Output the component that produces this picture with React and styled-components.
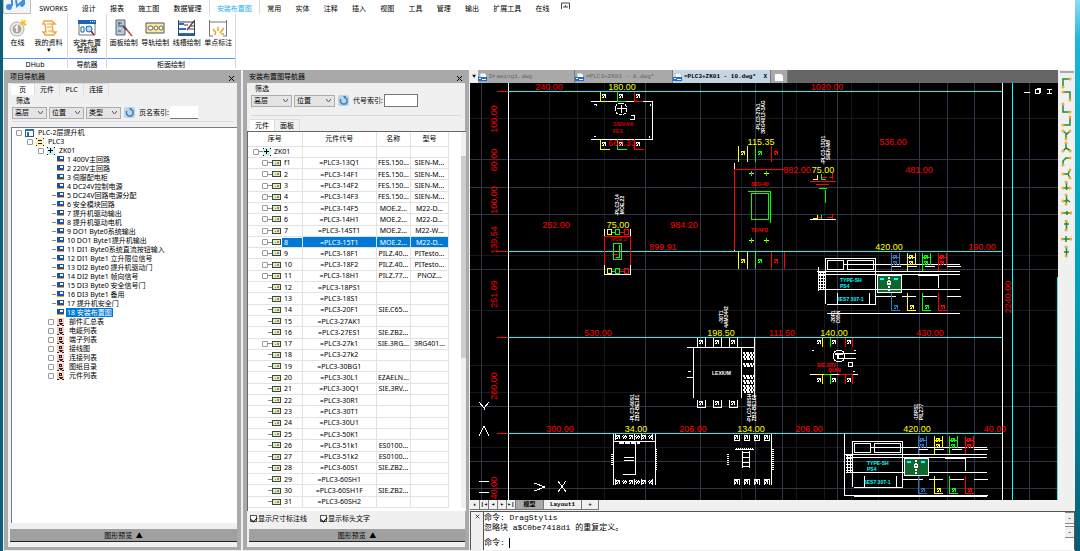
import React, { useState } from 'react';
import styled, { createGlobalStyle, css } from 'styled-components';

const GlobalStyle = createGlobalStyle`
  * { box-sizing: border-box; }
  body {
    margin: 0;
    background: #08708a;
    font: 7px/9px "Noto Sans", "Noto Sans CJK SC", sans-serif;
    color: #000;
  }
  button, input, select { font: inherit; color: inherit; margin: 0; }
  button { border: 0; padding: 0; background: none; }
`;

const Desktop = styled.div`
  height: 100vh;
  padding: 0 5px 0 3px;
  background: linear-gradient(to right, #0a6078 50%, transparent 50%),
    linear-gradient(#8fdcf4 0, #1fb4dc 40px, #08b0cc 130px, #009fba 300px, #0a7c96 430px, #045c72);
`;

const Window = styled.div`
  height: 100%;
  display: flex;
  flex-direction: column;
  background: #f0f0f0;
`;

/* ---------- ribbon ---------- */

const Ribbon = styled.header`
  height: 70px;
  background: #fff;
  flex: none;
`;

const TabStrip = styled.nav`
  height: 14px;
  max-width: 571px;
  display: flex;
  justify-content: space-between;
`;

const Logo = styled.div`
  width: 28px;
  height: 14px;
  border: 1px solid #b9bec8;
  border-top: 0;
  background: #f2f4f9;
  margin-right: 1px;
  svg { display: block; }
`;

const RibbonTab = styled.button`
  padding: 3px 7px 0;
  white-space: nowrap;
  ${(p) => p.$active && css`
    color: #1fb0ee;
    border-left: 1px solid #d8d8d8;
    border-right: 1px solid #d8d8d8;
  `}
`;

const Collapse = styled.button`
  padding: 0 4px;
`;

const Groups = styled.div`
  height: 54px;
  display: flex;
`;

const Group = styled.section`
  width: ${(p) => p.$width}px;
  display: flex;
  flex-direction: column;
  border-right: 1px solid #d4d7dc;
`;

const GroupButtons = styled.div`
  flex: 1;
  display: flex;
  justify-content: space-around;
  padding: 5px 1px 0;
  border-bottom: 1px solid #4a96ee;
`;

const GroupTitle = styled.div`
  height: 9px;
  line-height: 11px;
  text-align: center;
`;

const BigButton = styled.button`
  display: flex;
  flex-direction: column;
  align-items: center;
  gap: 2px;
  line-height: 7px;
  white-space: pre-line;
  svg { width: 20px; height: 18px; }
`;

/* ---------- docked panels ---------- */

const Work = styled.main`
  flex: 1;
  min-height: 0;
  display: flex;
`;

const Panel = styled.section`
  width: ${(p) => p.$width}px;
  flex: none;
  display: flex;
  flex-direction: column;
  border: solid #a9a9a9;
  border-width: 0 4px 3px;
  margin: 0 1px 1px;
  background: #f0f0f0;
`;

const PanelTitle = styled.h2`
  height: 13px;
  flex: none;
  margin: 0;
  padding: 2px 2px 0;
  background: #a9a9a9;
  font: inherit;
  display: flex;
  justify-content: space-between;
  svg { width: 7px; height: 7px; display: block; margin-top: 2px; }
`;

const PanelTabs = styled.div`
  display: flex;
  height: 12px;
  flex: none;
  padding: 0 3px;
`;

const PanelTab = styled.button`
  padding: 0 5px;
  min-width: 24px;
  border-right: 1px solid #ddd;
  border-top: 1px solid #ddd;
  background: ${(p) => (p.$active ? '#fff' : 'transparent')};
`;

const Filter = styled.fieldset`
  border: 0;
  border-bottom: 1px solid #d8d8d8;
  margin: 1px 4px ${(p) => p.$below}px;
  padding: 0;
  height: ${(p) => p.$height}px;
  flex: none;
  legend { padding: 0 2px; margin-left: 2px; height: 9px; }
`;

const FilterRow = styled.div`
  display: flex;
  align-items: center;
  gap: 2px;
  height: 15px;
`;

const SelectShell = styled.div`
  display: grid;
  width: ${(p) => p.$width}px;
  height: 12px;
  border: 1px solid #adadad;
  background: #e4e4e4;
  select, svg { grid-area: 1 / 1; }
  select {
    appearance: none;
    border: 0;
    background: none;
    padding: 0 2px;
    width: 100%;
    line-height: 9px;
  }
  svg { width: 5px; height: 4px; place-self: center end; margin-right: 3px; pointer-events: none; }
`;

const IndexLabel = styled.label`
  display: flex;
  align-items: center;
  gap: 1px;
  margin-left: 2px;
`;

const IndexInput = styled.input`
  width: ${(p) => p.$width}px;
  height: 13px;
  border: solid #777;
  border-width: ${(p) => (p.$boxed ? 1 : 0)}px;
  border-bottom-width: 1px;
  padding: 0 2px;
  background: #fff;
`;

const RefreshButton = styled.button`
  width: 11px;
  height: 11px;
  margin-left: 1px;
  svg { display: block; width: 11px; height: 11px; }
`;

const PreviewButton = styled.button`
  height: 13px;
  flex: none;
  margin: 6px 0 5px 2px;
  background: #a0a0a0;
  border-bottom: 1px solid #222;
`;

const Tree = styled.ul`
  flex: 1;
  min-height: 0;
  overflow: hidden;
  margin: 0 0 0 3px;
  padding: 0 4px;
  list-style: none;
  background: #fff;
  border: solid #777c88;
  border-width: 1px 0 0 1px;
`;

const TreeRow = styled.li`
  height: 9px;
  display: flex;
  align-items: center;
  gap: ${(p) => p.$gap}px;
  padding-left: ${(p) => p.$indent}px;
  white-space: nowrap;
  svg { flex: none; }
`;

const TreeText = styled.span`
  line-height: 9px;
  padding: 0 1px;
  ${(p) => p.$selected && css`
    background: #0078d7;
    color: #fff;
  `}
`;

const Expander = styled.span`
  width: 6px;
  height: 6px;
  flex: none;
  border: 1px solid ${(p) => (p.$hidden ? 'transparent' : '#999')};
  border-radius: 1px;
`;

const Dash = styled.span`
  width: 4px;
  height: 1px;
  flex: none;
  background: ${(p) => (p.$hidden ? 'transparent' : '#888')};
`;

/* ---------- component table ---------- */

const TableBox = styled.div`
  flex: 1;
  min-height: 0;
  display: flex;
  justify-content: space-between;
  margin-right: -1px;
  padding-bottom: 3px;
  background: #fff;
  border: solid #666;
  border-width: 1px 0 0 1px;
`;

const PartsTable = styled.table`
  width: 201px;
  height: 100%;
  table-layout: fixed;
  border-collapse: collapse;
  line-height: 9px;
  th, td {
    padding: 0;
    text-align: center;
    font-weight: normal;
    white-space: nowrap;
    overflow: hidden;
    border-bottom: 1px solid #e2e2e2;
    border-right: 1px solid #e2e2e2;
  }
  th { height: 14px; }
`;

const PartRow = styled.tr`
  td { ${(p) => p.$selected && 'background: #0078d7; color: #fff;'} }
  td:first-child { background: #fff; }
`;

const NumberCell = styled.div`
  display: flex;
  align-items: center;
  padding-left: ${(p) => p.$indent}px;
`;

const NumberText = styled.span`
  flex: 1;
  text-align: left;
  padding-left: 2px;
  margin-left: 1px;
  ${(p) => p.$selected && 'background: #0078d7; color: #fff;'}
`;

const Scrollbar = styled.div`
  width: 5px;
  background: #f0f0f0;
  padding: 24px 0 150px;
  div { height: 100%; background: #cdcdcd; }
`;

const CheckRow = styled.div`
  display: flex;
  gap: 13px;
  height: 12px;
  flex: none;
  padding: 3px 3px 0;
  label { display: flex; align-items: center; gap: 1px; }
  input {
    appearance: none;
    width: 7px;
    height: 7px;
    border: 1px solid #555;
    background: #fff;
    display: grid;
    place-items: center;
  }
  input:checked::after {
    content: "";
    width: 5px;
    height: 3px;
    border: solid #111;
    border-width: 0 0 1px 1px;
    transform: rotate(-45deg);
  }
`;

/* ---------- drawing area ---------- */

const Editor = styled.section`
  flex: 1;
  min-width: 0;
  display: flex;
  flex-direction: column;
`;

const EditorTop = styled.div`
  flex: 1;
  min-height: 0;
  display: flex;
`;

const EditorColumn = styled.div`
  flex: 1;
  min-width: 0;
  display: flex;
  flex-direction: column;
`;

const DocTabs = styled.div`
  height: 13px;
  flex: none;
  display: flex;
  background: #666;
  font-family: "Liberation Mono", monospace;
  font-size: 6px;
`;

const TabList = styled.button`
  width: 8px;
  background: #f0f0f0;
  font-size: 6px;
`;

const DocTab = styled.button`
  width: ${(p) => p.$width}px;
  display: flex;
  align-items: center;
  gap: 1px;
  white-space: nowrap;
  border-right: 1px solid #777;
  background: ${(p) => (p.$active ? '#c5d5e4' : '#a9a9a9')};
  color: ${(p) => (p.$active ? '#000' : '#666')};
  font-weight: ${(p) => (p.$active ? 'bold' : 'normal')};
  svg { flex: none; }
  span:last-child { margin-left: auto; padding-right: 3px; }
`;

const Canvas = styled.div`
  flex: 1;
  min-height: 0;
  background: #000;
  svg { display: block; width: 100%; height: 100%; }
`;

const ToolStrip = styled.aside`
  width: 17px;
  flex: none;
  display: flex;
  flex-direction: column;
  align-items: center;
  padding-top: 4px;
  background: #f0f0f0;
  div { border: solid #aaa; border-width: 1px 0; height: 2px; width: 14px; margin: -3px 0 3px; }
  button { height: 13px; }
  svg { display: block; width: 11px; height: 13px; }
`;

const LayoutBar = styled.div`
  height: 10px;
  flex: none;
  display: flex;
  font-family: "Liberation Mono", "Noto Sans CJK SC", monospace;
`;

const LayoutButton = styled.button`
  width: ${(p) => p.$width}px;
  line-height: 8px;
  font-size: 6px;
  font-weight: bold;
  border: 1px solid #777;
  border-width: 0 1px 1px 0;
  background: ${(p) => (p.$active ? '#a9a9a9' : '#f0f0f0')};
`;

const CommandBox = styled.div`
  height: 39px;
  flex: none;
  display: flex;
  border: 1px solid #555;
  border-bottom: 0;
  margin: 1px 0 1px;
  background: #fff;
  font-family: "Liberation Mono", "Noto Sans CJK SC", monospace;
`;

const CommandClose = styled.button`
  width: 13px;
  flex: none;
  background: #f0f0f0;
  border-right: 1px solid #555;
  display: flex;
  justify-content: center;
  padding-top: 2px;
`;

const CommandText = styled.div`
  flex: 1;
  padding-top: 1px;
  p { margin: 0; line-height: 10px; font-size: 8px; white-space: pre; }
  label { display: flex; align-items: center; gap: 4px; font-size: 8px; margin-top: 5px; line-height: 10px; }
  input { flex: 1; border: 0; border-left: 1px solid #000; height: 10px; padding: 0; outline: 0; }
`;

const CommandScroll = styled.div`
  width: 9px;
  display: flex;
  flex-direction: column;
  button { height: 12px; border: solid #888; border-width: 1px 0; margin-bottom: 2px; background: #f0f0f0; }
`;

/* ---------- small drawings ---------- */

const CloseIcon = ({ size = 7 }) => (
  <svg width={size} height={size} viewBox="0 0 7 7">
    <path d="M1 1l5 5M6 1L1 6" stroke="#000" fill="none" />
  </svg>
);

const PageIcon = () => (
  <svg width="8" height="7" viewBox="0 0 8 7" shapeRendering="crispEdges">
    <path fill="#1c50b0" d="M0 0h7v5H0z" />
    <path fill="#fff" d="M3 1h3v2H3z" />
    <path fill="#f0a020" d="M0 5h7v1H0z" />
  </svg>
);

const ListIcon = () => (
  <svg width="8" height="8" viewBox="0 0 8 8" shapeRendering="crispEdges">
    <path fill="#fac8be" d="M0 0h7v8H0z" />
    <path fill="#222" d="M2 1h3v3H2zM2 5h4v1H2zM0 7h2v1H0zM3 6h2v1H3zM5 7h2v1H5z" />
    <path fill="#fac8be" d="M3 2h1v1H3z" />
  </svg>
);

const CadIcon = () => (
  <svg width="10" height="10" viewBox="0 0 10 10" shapeRendering="crispEdges">
    <path fill="#fff" stroke="#9ab" strokeWidth=".5" d="M2 1h4l2 2v6H2z" />
    <path fill="#1670c8" d="M0 5h9v4H0z" />
    <path fill="#fff" d="M1 6h2v1H1zm3 1h4v1H4z" />
  </svg>
);

const PartIcon = () => (
  <svg width="9" height="6" viewBox="0 0 9 6" shapeRendering="crispEdges">
    <path fill="#cdf5c8" stroke="#444" d="M.5.5h8v5h-8z" />
    <path fill="#d07838" d="M3 3h1v1H3zm2-1h2v2H5z" />
  </svg>
);

const PlusBox = () => (
  <svg width="8" height="8" viewBox="0 0 8 8" shapeRendering="crispEdges">
    <path fill="#c8f4f0" d="M0 0h8v8H0z" />
    <path fill="#000" d="M3 1h1v5H3zM1 3h5v1H1zM0 0h1v1H0zM7 0h1v1H7zM0 7h1v1H0zM7 7h1v1H7z" />
  </svg>
);

const ICONS = {
  online: (
    <>
      <circle cx="9" cy="10" r="7" fill="#f0eeea" stroke="#aaa" />
      <circle cx="9" cy="10" r="4.500" fill="#a9a6a0" />
      <path d="M7 9l2-2v6" stroke="#fff" strokeWidth="1.500" fill="none" />
      <path fill="#ffc21a" d="M14 0l1 2 3-1-1 3 2 2-3 1-1-2-3 1 1-3z" />
    </>
  ),
  docs: (
    <>
      <path fill="#fff7e8" stroke="#eca84c" strokeWidth="1.500" d="M5 2h8l3 3h-3l1 8h3l-2 3H6l-2-3h3L6 5H4z" />
      <path stroke="#eca84c" d="M8 5h4M8 8h4M9 12h4" />
    </>
  ),
  navigator: (
    <>
      <path fill="#fff" stroke="#777" d="M2 2h16v14H2z" />
      <path fill="#1766b8" d="M1 1h18v4H1z" />
      <path fill="#fff" d="M13 2h1v1h-1zm2 0h1v1h-1zm2 0h1v1h-1z" />
      <path stroke="#1766b8" fill="none" d="M4 8h3v5H4zM9 8h4" />
      <circle cx="12" cy="10" r="3" fill="#b8dcf6" stroke="#1766b8" />
      <path stroke="#923" strokeWidth="1.500" d="M14 12l3 4" />
    </>
  ),
  panel: (
    <>
      <path fill="#bac8d8" stroke="#567" d="M2 1h9v15H2z" />
      <path stroke="#456" fill="none" d="M4 4h4M4 7h5M4 12h3M5 3v3" />
      <path stroke="#544" strokeWidth="2" d="M9 7l4 4" />
      <path stroke="#c44" strokeWidth="1.500" d="M13 11l5 6" />
    </>
  ),
  rail: (
    <>
      <path fill="#f8eaa0" stroke="#555" d="M1 4h18v10H1z" />
      <rect x="3" y="7" width="5" height="4" rx="2" fill="#fff" stroke="#665" />
      <circle cx="11" cy="9" r="2" fill="#fff" stroke="#665" />
      <circle cx="16" cy="9" r="2" fill="#fff" stroke="#665" />
    </>
  ),
  duct: (
    <>
      <path fill="#2674bd" d="M1 4h6v2H1zm0 5h8v2H1zm0 5h17v3H1z" />
      <path stroke="#345" fill="none" d="M1.500 1v15h16V1M2 3h16M7 6h4M13 7h5M12 10h6" />
      <path stroke="#833" strokeWidth="1.500" d="M17 2l-7 9" />
    </>
  ),
  point: (
    <>
      <path stroke="#777" fill="none" d="M1.500 1v16M18.500 1v16M2 3h16M1 17h4m10 0h4" />
      <path stroke="#e6ad18" strokeWidth="1.500" fill="none" d="M10 8v4M5 10l3 4m4 0l4-5M6 15h2m5 0h3" />
    </>
  ),
};

const Chevron = () => (
  <svg viewBox="0 0 5 4"><path d="M0 0l2.500 3L5 0" stroke="#555" fill="none" /></svg>
);

const Refresh = () => (
  <RefreshButton aria-label="刷新">
    <svg viewBox="0 0 11 11">
      <rect width="11" height="11" rx="2" fill="#c2d2e2" />
      <path d="M2.500 4v3l2 2h3l1.500-2V4L7 2.500" fill="none" stroke="#2a86c8" strokeWidth="1.500" />
      <path fill="#2a86c8" d="M5 1l3 0-1 3z" />
    </svg>
  </RefreshButton>
);

/* ---------- data ---------- */

const ribbonTabs = ['SWORKS', '设计', '报表', '施工图', '数据管理', '安装布置图', '常用', '实体', '注释',
  '插入', '视图', '工具', '管理', '输出', '扩展工具', '在线'];

const ribbonGroups = [
  { title: 'DHub', width: 65, buttons: [['online', '在线'], ['docs', '我的资料\n▾']] },
  { title: '导航器', width: 39, buttons: [['navigator', '安装布置\n导航器']] },
  { title: '柜面绘制', width: 129, buttons: [['panel', '面板绘制'], ['rail', '导轨绘制'], ['duct', '线槽绘制'], ['point', '单点标注']] },
];

const pages = ['1 400V主回路', '2 220V主回路', '3 伺服配电柜', '4 DC24V控制电源', '5 DC24V回路电源分配',
  '6 安全模块回路', '7 提升机驱动输出', '8 提升机驱动电机', '9 DO1 Byte0系统输出', '10 DO1 Byte1提升机输出',
  '11 DI1 Byte0系统直流按钮输入', '12 DI1 Byte1 立升限位信号', '13 DI2 Byte0 提升机驱动门',
  '14 DI2 Byte1 帧向信号', '15 DI3 Byte0 安全信号门', '16 DI3 Byte1 备用', '17 提升机安全门', '18 安装布置图'];

const lists = ['部件汇总表', '电缆列表', '端子列表', '接线图', '连接列表', '图纸目录', '元件列表'];

const F = 'FES.150...';
const M = 'MOE.2...';
const parts = [
  ['f1', '13Q1', F, 'SIEN-M...'], ['2', '14F1', F, 'SIEN-M...'], ['3', '14F2', F, 'SIEN-M...'],
  ['4', '14F3', F, 'SIEN-M...'], ['5', '14F5', M, 'M22-D...'], ['6', '14H1', M, 'M22-D...'],
  ['7', '14ST1', M, 'M22-W...'], ['8', '15T1', M, 'M22-D...'], ['9', '18F1', 'PILZ.40...', 'PITesto...'],
  ['10', '18F2', 'PILZ.40...', 'PITesto...'], ['11', '18H1', 'PILZ.77...', 'PNOZ...'], ['12', '18PS1'],
  ['13', '18S1'], ['14', '20F1', 'SIE.C65...'], ['15', '27AK1'], ['16', '27ES1', 'SIE.ZB2...'],
  ['17', '27k1', 'SIE.3RG...', '3RG401...'], ['18', '27k2'], ['19', '30BG1'], ['20', '30L1', 'EZAELN...'],
  ['21', '30Q1', 'SIE.3RV...'], ['22', '30R1'], ['23', '30T1'], ['24', '30U1'], ['25', '50K1'],
  ['26', '51k1', 'ES0100...'], ['27', '51k2', 'ES0100...'], ['28', '60S1', 'SIE.ZB2...'], ['29', '60SH1'],
  ['30', '60SH1F', 'SIE.ZB2...'], ['31', '60SH2'],
];

const R = '#f00';
const Y = '#ff0';
const G = '#0f0';
const B = '#2f78c0';
const C = '#0ff';
const W = '#fff';

// text, centre x, baseline y, colour
const dims = [
  ['240.00', 549, 90, R], ['180.00', 622, 90, Y], ['1020.00', 827, 90, R],
  ['660.33', 622, 146, R], ['115.35', 761, 145, Y], ['536.00', 893, 145, R],
  ['882.00', 797, 173, R], ['75.00', 823, 173, Y], ['481.00', 919, 173, R],
  ['252.00', 556, 228, R], ['75.00', 618, 228, Y], ['984.20', 684, 228, R],
  ['899.91', 663, 250, R], ['420.00', 889, 250, Y], ['190.00', 982, 250, R],
  ['530.00', 598, 336, R], ['198.50', 721, 336, Y], ['111.50', 782, 336, R],
  ['140.00', 834, 336, Y], ['430.00', 930, 336, R],
  ['300.00', 560, 432, R], ['34.00', 636, 432, Y], ['206.00', 693, 432, R],
  ['134.00', 751, 432, Y], ['206.00', 809, 432, R], ['420.00', 917, 432, Y], ['40.00', 995, 432, R],
];

// text, baseline x, centre y, colour
const verticals = [
  ['100.00', 497, 119, R], ['60.00', 497, 160, R], ['100.00', 497, 200, R], ['139.54', 497, 240, R],
  ['251.09', 497, 294, R], ['260.00', 497, 386, R], ['40.00', 497, 488, R], ['2240.00', 1011, 297, R],
];

// stacked component tags, x, centre y
const tags = [
  ['-PLC3-27k1', '3RG4012-3AG', 761, 117], ['-PLC3-13Q1', 'SIEN-M8', 826, 150], ['-PLC3-14', 'MOE.22', 620, 205],
  ['-30T1', '4AM3442', 724, 317], ['-PLC3-60S1', 'ZB2-BE101', 635, 408], ['-PLC3-60SH', 'ZB2-BE102', 752, 408],
  ['-20F1', 'C65N', 836, 317], ['-18PS1', 'PILZ77', 919, 412],
];

const range = (n) => Array.from({ length: n }, (_, i) => i);

const Screw = ({ x, y, r = 2, color = W }) => (
  <g stroke={color} fill="none">
    <circle cx={x} cy={y} r={r} strokeDasharray="2 1" />
    <path d={`M${x - 1} ${y + 1}l2-2`} />
  </g>
);

// wide power supply block with four coloured wires on each side
const Supply = ({ x, y }) => (
  <g transform={`translate(${x} ${y})`} fill="none" stroke={W}>
    <path d="M10 62.500h133M27 13.500h116M2 23.500h141M2 38.500h141M0 20.500h143M8.500 53V7.500h50v46z" />
    <path d="M10.500 9.500h16v9h-16zM30.500 9.500h26v9h-26zM20.500 42v11M52.500 42v11M74 15.500h10m6 0h10m8 0h10m12 0h14M59 45.500h20m6 0h14m6 0h15m10 0h14M101 24.500h20v12" />
    <path d="M3.500 20v18M6.500 20v18M2 21.500h6M2 24.500h6M2 27.500h6M2 30.500h6M2 33.500h6M2 36.500h6" />
    <rect x="60.500" y="24.500" width="24" height="17" fill="#13652f" />
    <path stroke={C} strokeWidth="2" d="M63 28h4m10 0h4" />
    <path strokeWidth="2" strokeDasharray="2 1" d="M72 26v14" />
    <circle cx="72" cy="32" r="2" />
    {[[74, B], [90, Y], [105, G], [121, R]].map(([wx, color]) => (
      <g key={wx} stroke={color}>
        <path d={`M${wx}.5 2v18M${wx}.5 42v17h8M${wx} 6.500h8M${wx + 8}.5 2v12`} />
        <Screw x={wx + 4} y={6} color={color} />
        <Screw x={wx + 4} y={12} color={color} />
        <Screw x={wx + 5} y={56} color={color} />
      </g>
    ))}
    <g fill={C} stroke="none" fontSize="5" fontWeight="bold">
      <text x="23" y="31">TYPE-SH</text>
      <text x="23" y="37">PS4</text>
      <text x="20" y="50">6ES7 307-1</text>
    </g>
  </g>
);

const Drawing = () => (
  <svg viewBox="470 83 588 418" preserveAspectRatio="xMinYMin slice" shapeRendering="crispEdges"
    fontFamily='"Liberation Sans Narrow", "Liberation Sans", sans-serif'>
    <g stroke="#17171c">
      {[549, 577, 604, 741, 796, 824, 851, 878, 1002].map((x) => <path key={x} d={`M${x}.5 83v418`} />)}
      {[118, 255, 310, 365, 392, 447].map((y) => <path key={y} d={`M470 ${y}.5h588`} />)}
    </g>
    <g stroke="#333346">
      {[481, 645, 700, 755, 782, 837, 919, 947, 974, 1029].map((x) => <path key={x} d={`M${x}.5 83v418`} />)}
      {[159, 187, 214, 269, 406, 461, 488].map((y) => <path key={y} d={`M470 ${y}.5h588`} />)}
    </g>

    <path stroke={W} d="M508.500 83v418M1002.500 83v418" />
    <path stroke={C} d="M508 91.500h494M508 251.500h494M508 337.500h494M508 433.500h494M1012.500 83v418M1057.500 277v224" />
    <path stroke={R} d="M497 91.500h11M497 251.500h11M497 337.500h11M497 433.500h11" />

    {/* filter module, top left */}
    <g fill="none">
      <path stroke={W} d="M591 101.500h61v38h-61M631 115.500h3v4h-4M594 104h2v2M650 104v2M594 136h2M649 136v2" />
      {[600, 617, 634].map((x, i) => (
        <g key={x}>
          <path stroke={[Y, G, R][i]} d={`M${x} 101.500h9M${x}.5 92v9M${x}.5 139v10h9`} />
          <Screw x={x + 4} y={96} />
          <Screw x={x + 4} y={144} />
        </g>
      ))}
      <circle cx="621" cy="109" r="6" stroke={W} strokeDasharray="3 1" />
      <path stroke={W} d="M617 108.500h9M621.500 105v8" />
      <g fill={R} fontSize="5"><text x="613" y="126">SIEN-M8</text><text x="613" y="133">FES</text></g>
    </g>

    {/* contactor */}
    <g fill="none">
      <path stroke={W} d="M604.500 229v45h26v-45" />
      <path stroke={R} d="M604.500 265V236.500h26V265M612 254.500h6M615 257.500h4" />
      <path stroke={G} d="M613.500 243.500h8v16h-8zM619.500 245v12h-4" />
      {[229, 268].map((y) => (
        <g key={y}>
          <path stroke={Y} d={`M607.500 ${y}.5h4v5h-4z`} />
          <path stroke={G} d={`M615.500 ${y}.5h4v5h-4zM612 ${y + 3}.5h3`} />
          <path stroke={R} d={`M624.500 ${y}.5h4v5h-4zM620 ${y + 3}.5h4`} />
        </g>
      ))}
      <text x="611" y="241" fill={R} fontSize="5">MOE.2</text>
    </g>

    {/* transformer */}
    <g fill="none">
      <path stroke={W} d="M734.500 163v88" />
      <path stroke={R} d="M734.500 250V169.500h49M771.500 146v16M771.500 252v17M784.500 252v17M735 169.500h49" />
      <path stroke={Y} d="M738.500 146v16M747.500 146v16M738.500 252v17M747.500 252v17" />
      <path stroke={G} d="M755.500 146v16M755.500 252v17M748 191.500h22v31M751.500 193.500h17v26h-17z" />
      <path stroke={Y} d="M749 173.500h5M764 173.500h5M749 240.500h5M764 240.500h5" />
      <path stroke={G} d="M751.500 171v5M766.500 171v5M751.500 238v5M766.500 238v5" />
      {[[743, Y], [760, G], [776, R]].map(([x, color]) => (
        <g key={x}><Screw x={x} y={153} color={color} /><Screw x={x} y={261} color={color} /></g>
      ))}
      <g fill={R} fontSize="5" fontWeight="bold"><text x="751" y="186">3RG-40</text><text x="751" y="232">TRAFO</text></g>
    </g>

    {/* breaker */}
    <g fill="none">
      <path stroke={R} d="M810 181.500h26M816 184.500h13M825.500 198v4M821 177.500h6M829 177.500h4M818 217.500h4M827 217.500h5" />
      <path stroke={G} d="M819 188.500h8M825.500 190v13M821.500 174v5h4M821.500 215v4h4" />
      <path stroke={Y} d="M813 179.500h4v-5M813 218.500h4v-4" />
      <path stroke={W} d="M810 219.500h26" />
      <path stroke={R} d="M832.500 173v6M832.500 214v5" />
    </g>

    {/* drive unit */}
    <g fill="none" stroke={W}>
      <path d="M693.500 347v51M687 347.500h67M687 377.500h6M688 371.500h3M741.500 347v51M754.500 337v61" />
      {[697, 713, 729].map((x) => (
        <g key={x}>
          <path d={`M${x}.5 338v9h8v-9M${x}.5 400v7h8v-7`} />
          <Screw x={x + 4} y={342} /><Screw x={x + 4} y={403} />
        </g>
      ))}
      {[353, 357, 364, 376, 381, 386, 390].map((y) => (
        <path key={y} strokeWidth="2" strokeDasharray="2 1 3 1" d={`M743 ${y}h11M744 ${y + 2}h9`} />
      ))}
      <text x="712" y="375" fontSize="5" fontWeight="bold" stroke="none" fill={W}>LEXIUM</text>
    </g>

    {/* terminal relay */}
    <g fill="none" stroke={W}>
      <path d="M613.500 434v51M655.500 434v51M614 441.500h42M635.500 444v30M623 474.500h13M624 457.500h10M624 460.500h10" />
      <path strokeDasharray="1 1" strokeWidth="2" d="M612 454v12M656 449v22" />
      <path strokeWidth="2" d="M619 443h21" strokeDasharray="5 1" />
      {range(6).map((i) => (
        <g key={i}><Screw x={618 + i * 6.500} y={437} /><Screw x={618 + i * 6.500} y={482} /></g>
      ))}
      <path d="M615.500 434v6M634.500 434v6M641.500 434v6M652.500 434v6M615.500 479v6M634.500 479v6M641.500 479v6M652.500 479v6" />
    </g>

    {/* safety relay */}
    <g fill="none" stroke={W}>
      <path d="M771.500 434v51M742.500 451v17M749.500 451v17M742 452.500h7M742 457.500h7M742 462.500h7M742 466.500h7M735 449.500h19" />
      <path strokeDasharray="1 1" strokeWidth="2" d="M728 454v12M773 449v22M736 449h18" />
      {range(4).map((i) => (
        <g key={i}>
          <path d={`M${734 + i * 10}.5 435v5h5v-5M${734 + i * 10}.5 485v-6h5v6`} />
          <Screw x={736 + i * 10} y={437} /><Screw x={736 + i * 10} y={482} />
        </g>
      ))}
    </g>

    {/* line filter, middle right */}
    <g fill="none">
      <path stroke={W} d="M810 374.500h48M839 353.500h17M839 358.500h17M848.500 362.500h4v4h-4zM812 350h2M854 350h2M853 371h2" />
      {[[822, Y], [830, G], [845, R], [852, R]].map(([x, color]) => (
        <path key={x} stroke={color} d={`M${x}.5 338v9M${x}.5 374v10M${x - 6} 374.500h6`} />
      ))}
      {[819, 834, 849].map((x) => <g key={x}><Screw x={x} y={342} /><Screw x={x} y={380} /></g>)}
      <circle cx="839" cy="356" r="6" stroke={W} />
      <path stroke={W} strokeWidth="2" d="M835 354h8M838 353v6" />
      <g fill={R} fontSize="5" fontWeight="bold"><text x="817" y="367">SIE.3RV</text><text x="828" y="372">QUIN</text></g>
    </g>

    <Supply x={817} y={251} />
    <Supply x={844} y={434} />
    <path stroke={W} fill="none" d="M818.500 267v24M818 289.500h142M844.500 434v62M844 495.500h144" />

    {/* axis markers */}
    <path stroke={W} fill="none" d="M479 402l5 6 5-6M484 408v2M479 436l5-10 5 10M479 481.500h10M479 492.500h10M534 483l11 4-11 4M558 481l8 11m0-11l-8 11" />

    {/* window buttons inside the viewport */}
    <path stroke={W} fill="none" d="M1024 92.500h6M1035.500 89.500h4v4h-4zM1037 88.500h3v4M1047 89.500h5M1047 93.500h5M1049.500 90v3" />

    <g fontSize="9" textAnchor="middle">
      {dims.map(([text, x, y, color]) => <text key={`${x}-${y}`} x={x} y={y} fill={color}>{text}</text>)}
      {verticals.map(([text, x, y, color]) => (
        <text key={y} transform={`translate(${x} ${y}) rotate(-90)`} fill={color}>{text}</text>
      ))}
    </g>
    <g fontSize="5" fontWeight="bold" fill={W} textAnchor="middle">
      {tags.map(([a, b, x, y]) => (
        <g key={a} transform={`translate(${x} ${y}) rotate(-90)`}>
          <text y="-1">{a}</text>
          <text y="4">{b}</text>
        </g>
      ))}
    </g>
  </svg>
);

const toolPaths = [
  'M2 11V3h7', 'M2 3h7v8', 'M2 2v8h7', 'M9 2v8H2', 'M2 3l4 3 3-3M5 6v5', 'M5 2v5l-3 3M5 7l5 3',
  'M2 11V7l3-3h5', 'M2 7h5l2-4M7 7l2 4', 'M5.500 2v8M2 8h7', 'M5.500 2v9M5 6l4 3M2 8h4', 'M1 7h9M6 5v4',
  'M5.500 1v10M3 5h5', 'M1 7h9M5 4v6', 'M5.500 1v11M3 7h5',
];

const toolEnds = [
  [[9, 3], [2, 11]], [[2, 3], [9, 11]], [[2, 2], [9, 10]], [[9, 2], [2, 10]], [[2, 3], [9, 3], [5, 11]],
  [[5, 2], [2, 10], [9, 10]], [[2, 11], [9, 4]], [[2, 7], [9, 3], [9, 11]], [[5, 2], [2, 8], [9, 8]],
  [[5, 2], [2, 8], [5, 11]], [[1, 7], [10, 7]], [[5, 2], [5, 11]], [[1, 7], [10, 7]], [[5, 2], [5, 11]],
];

const Select = ({ label, width }) => (
  <SelectShell $width={width}>
    <select aria-label={label}><option>{label}</option></select>
    <Chevron />
  </SelectShell>
);

const PanelHeader = ({ children }) => (
  <PanelTitle>{children}<button aria-label="关闭"><CloseIcon /></button></PanelTitle>
);

function ProjectPanel() {
  const [current, setCurrent] = useState(17);

  return (
    <Panel $width={237}>
      <PanelHeader>项目导航器</PanelHeader>
      <PanelTabs>
        <PanelTab $active>页</PanelTab>
        <PanelTab>元件</PanelTab>
        <PanelTab>PLC</PanelTab>
        <PanelTab>连接</PanelTab>
      </PanelTabs>
      <Filter $height={26} $below={5}>
        <legend>筛选</legend>
        <FilterRow>
          <Select label="高层" width={35} />
          <Select label="位置" width={35} />
          <Select label="类型" width={35} />
          <Refresh />
          <IndexLabel>页名索引:<IndexInput $width={28} /></IndexLabel>
        </FilterRow>
      </Filter>
      <Tree>
        <TreeRow $indent={0} $gap={3}>
          <Expander />
          <svg width="9" height="8" viewBox="0 0 9 8" shapeRendering="crispEdges">
            <path fill="#fff" stroke="#456" d="M.5.5h8v7h-8z" />
            <path fill="#2070b8" d="M0 0h9v2H0zM2 3h2v4H2z" />
          </svg>
          <TreeText>PLC-2层提升机</TreeText>
        </TreeRow>
        <TreeRow $indent={11} $gap={3}>
          <Expander />
          <svg width="8" height="8" viewBox="0 0 8 8" shapeRendering="crispEdges">
            <path fill="#ffeeb0" d="M0 0h8v8H0z" />
            <path fill="#222" d="M2 2h4v1H2zM2 5h4v1H2zM0 0h1v1H0zM7 0h1v1H7zM0 7h1v1H0zM7 7h1v1H7z" />
          </svg>
          <TreeText>PLC3</TreeText>
        </TreeRow>
        <TreeRow $indent={22} $gap={3}><Expander /><PlusBox /><TreeText>ZK01</TreeText></TreeRow>
        {pages.map((name, i) => (
          <TreeRow key={name} $indent={36} $gap={1} onClick={() => setCurrent(i)}>
            <Dash $hidden={i < 4 || i === 17} />
            <PageIcon />
            <TreeText $selected={i === current}>{name}</TreeText>
          </TreeRow>
        ))}
        {lists.map((name) => (
          <TreeRow key={name} $indent={32} $gap={3}><Expander /><ListIcon /><TreeText>{name}</TreeText></TreeRow>
        ))}
      </Tree>
      <PreviewButton>图形预览 &nbsp;▲</PreviewButton>
    </Panel>
  );
}

function LayoutPanel() {
  const [selected, setSelected] = useState('8');
  const [showDims, setShowDims] = useState(true);
  const [showTags, setShowTags] = useState(true);

  return (
    <Panel $width={226}>
      <PanelHeader>安装布置图导航器</PanelHeader>
      <Filter $height={32} $below={3}>
        <legend>筛选</legend>
        <FilterRow>
          <Select label="高层" width={41} />
          <Select label="位置" width={41} />
          <Refresh />
          <IndexLabel>代号索引:<IndexInput $width={34} $boxed /></IndexLabel>
        </FilterRow>
      </Filter>
      <PanelTabs>
        <PanelTab $active>元件</PanelTab>
        <PanelTab>面板</PanelTab>
      </PanelTabs>
      <TableBox>
        <PartsTable>
          <colgroup><col width="54" /><col width="74" /><col width="34" /><col width="38" /></colgroup>
          <thead>
            <tr><th>序号</th><th>元件代号</th><th>名称</th><th>型号</th></tr>
          </thead>
          <tbody>
            <PartRow>
              <td><NumberCell $indent={5}><Expander /><Dash /><PlusBox /><NumberText>ZK01</NumberText></NumberCell></td>
              <td /><td /><td />
            </PartRow>
            {parts.map(([num, code, name, type]) => (
              <PartRow key={num} $selected={num === selected} onClick={() => setSelected(num)}>
                <td>
                  <NumberCell $indent={14}>
                    <Expander $hidden={Number(num) > 11 && num !== '17'} />
                    <Dash />
                    <PartIcon />
                    <NumberText $selected={num === selected}>{num}</NumberText>
                  </NumberCell>
                </td>
                <td>=PLC3-{code}</td>
                <td>{name}</td>
                <td>{type}</td>
              </PartRow>
            ))}
          </tbody>
        </PartsTable>
        <Scrollbar><div /></Scrollbar>
      </TableBox>
      <CheckRow>
        <label>
          <input type="checkbox" checked={showDims} onChange={(e) => setShowDims(e.target.checked)} />
          显示尺寸标注线
        </label>
        <label>
          <input type="checkbox" checked={showTags} onChange={(e) => setShowTags(e.target.checked)} />
          显示标头文字
        </label>
      </CheckRow>
      <PreviewButton>图形预览 &nbsp;▲</PreviewButton>
    </Panel>
  );
}

export default function App() {
  const [command, setCommand] = useState('');

  return (
    <Desktop>
      <GlobalStyle />
      <Window>
        <Ribbon>
          <TabStrip>
            <Logo>
              <svg width="26" height="13" viewBox="0 0 26 13">
                <path d="M8 0v6M12 0l1 6 7-6v5" fill="none" stroke="#3b8fe8" strokeWidth="2" />
                <circle cx="5" cy="7" r="3" fill="#3b8fe8" />
                <circle cx="18" cy="5" r="2" fill="#3b8fe8" />
              </svg>
            </Logo>
            {ribbonTabs.map((name) => (
              <RibbonTab key={name} $active={name === '安装布置图'}>{name}</RibbonTab>
            ))}
            <Collapse aria-label="折叠">
              <svg width="9" height="8" viewBox="0 0 9 8"><path d="M.5 7V1h8v6M2 5h5M4.500 3v2" fill="none" stroke="#444" /></svg>
            </Collapse>
          </TabStrip>
          <Groups>
            {ribbonGroups.map((group) => (
              <Group key={group.title} $width={group.width}>
                <GroupButtons>
                  {group.buttons.map(([icon, label]) => (
                    <BigButton key={icon}>
                      <svg viewBox="0 0 20 18">{ICONS[icon]}</svg>
                      {label}
                    </BigButton>
                  ))}
                </GroupButtons>
                <GroupTitle>{group.title}</GroupTitle>
              </Group>
            ))}
          </Groups>
        </Ribbon>
        <Work>
          <ProjectPanel />
          <LayoutPanel />
          <Editor>
            <EditorTop>
              <EditorColumn>
                <DocTabs>
                  <TabList aria-label="文件列表">▼</TabList>
                  <DocTab $width={97}><CadIcon /><span>Drawing1.dwg</span><span /></DocTab>
                  <DocTab $width={98}><CadIcon /><span>=PLC3+ZK01 - 8.dwg*</span><span /></DocTab>
                  <DocTab $width={98} $active><CadIcon /><span>=PLC3+ZK01 - 10.dwg*</span><span>X</span></DocTab>
                  <DocTab $width={17} aria-label="新建">
                    <svg width="14" height="8" viewBox="0 0 14 8"><path fill="#fff" d="M4 1h6l2 2v5H4z" /></svg>
                  </DocTab>
                </DocTabs>
                <Canvas><Drawing /></Canvas>
              </EditorColumn>
              <ToolStrip>
                <div />
                {toolPaths.map((d, i) => (
                  <button key={d} aria-label={`连接 ${i + 1}`}>
                    <svg viewBox="0 0 11 13">
                      <path d={d} fill="none" stroke="#1d8a35" strokeWidth="1.500" />
                      {toolEnds[i].map(([x, y]) => <circle key={`${x}${y}`} cx={x} cy={y} r="1.500" fill="#eeb02c" />)}
                    </svg>
                  </button>
                ))}
              </ToolStrip>
            </EditorTop>
            <LayoutBar>
              <LayoutButton $width={10}>▴</LayoutButton>
              {['|◂', '◂', '▸', '▸|'].map((c) => <LayoutButton key={c} $width={9}>{c}</LayoutButton>)}
              <LayoutButton $width={28} $active>模型</LayoutButton>
              <LayoutButton $width={38}>Layout1</LayoutButton>
              <LayoutButton $width={17}>+</LayoutButton>
            </LayoutBar>
            <CommandBox>
              <CommandClose aria-label="关闭命令行"><CloseIcon size={5} /></CommandClose>
              <CommandText>
                <p>命令: DragStylis</p>
                <p>忽略块 a$C0be7418d1 的重复定义。</p>
                <label>命令: <input value={command} onChange={(e) => setCommand(e.target.value)} /></label>
              </CommandText>
              <CommandScroll><button aria-label="向上">-</button><button aria-label="向下">-</button></CommandScroll>
            </CommandBox>
          </Editor>
        </Work>
      </Window>
    </Desktop>
  );
}
